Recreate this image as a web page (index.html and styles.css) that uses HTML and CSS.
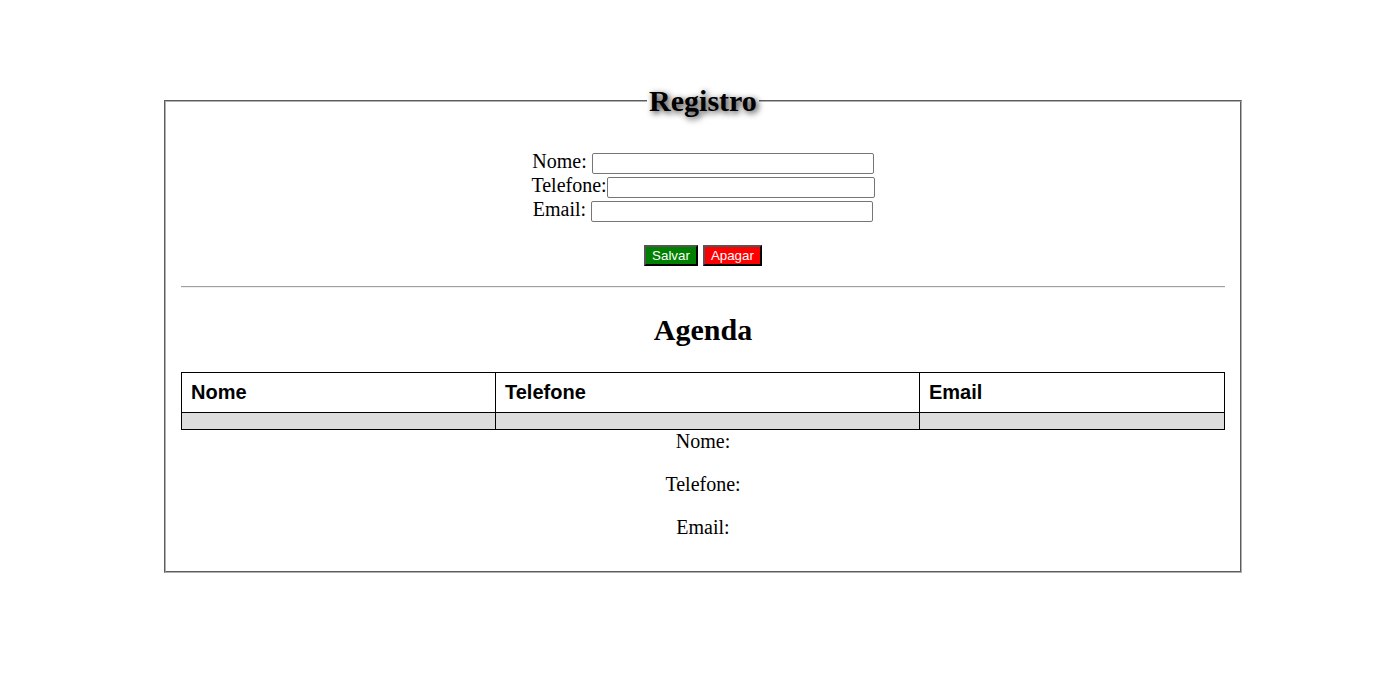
FILE: index.html
```html
<!DOCTYPE html>
<html lang="pt">
<head>
<meta charset="utf-8">
<title>Agenda</title>
<link rel="stylesheet" href="styles.css">
</head>
<body>
<fieldset class="registro">
  <legend class="registro-title">Registro</legend>
  <form class="form">
    <div class="fields">
      <div class="field-line">Nome: <input type="text" class="inp"></div>
      <div class="field-line">Telefone:<input type="text" class="inp inp-tel"></div>
      <div class="field-line">Email: <input type="text" class="inp"></div>
    </div>
    <div class="actions">
      <button type="button" class="btn btn-save">Salvar</button>
      <button type="button" class="btn btn-del">Apagar</button>
    </div>
  </form>
  <hr class="divider">
  <h2 class="agenda-title">Agenda</h2>
  <table class="agenda">
    <thead>
      <tr><th class="col-nome">Nome</th><th class="col-tel">Telefone</th><th class="col-email">Email</th></tr>
    </thead>
    <tbody>
      <tr class="empty-row"><td></td><td></td><td></td></tr>
    </tbody>
  </table>
  <div class="details">
    <p>Nome:</p>
    <p>Telefone:</p>
    <p>Email:</p>
  </div>
</fieldset>
</body>
</html>
```

FILE: styles.css
```css
html {
  background: #fff;
}
body {
  margin: 8px;
  font-family: "Liberation Serif", "Times New Roman", serif;
  font-size: 20px;
  color: #000;
}
.registro {
  width: 1044px;
  margin: 76px 0 0 156px;
  padding: 7px 15px 12px;
  border: 2px groove #b0b0b0;
  text-align: center;
}
.registro-title {
  padding: 0 2px;
  margin: 0 auto;
  font-size: 30px;
  font-weight: bold;
  text-shadow: 2px 2px 6px #222;
}
.form {
  margin: 24px 0 0;
}
.field-line {
  line-height: 24px;
  height: 24px;
}
.inp {
  font-family: "Liberation Sans", Arial, sans-serif;
  font-size: 13.33px;
  width: 276px;
  height: 17px;
  padding: 1px 2px;
  border: 1px solid #767676;
  border-radius: 2px;
  box-sizing: content-box;
  vertical-align: baseline;
}
.inp-tel {
  width: 262px;
}
.actions {
  margin-top: 24px;
  line-height: 21px;
}
.btn {
  font-family: "Liberation Sans", Arial, sans-serif;
  font-size: 13.33px;
  color: #fff;
  height: 21px;
  padding: 0 6px;
  border: 2px outset #555;
  vertical-align: top;
}
.btn-save {
  background: #008000;
}
.btn-del {
  background: #ff0000;
}
.divider {
  margin: 20px 0 0;
  border: 0;
  border-top: 1px solid #a0a0a0;
  border-bottom: 1px solid #eee;
}
.agenda-title {
  font-size: 30px;
  margin: 25px 0 25px;
}
.agenda {
  width: 100%;
  border-collapse: collapse;
  font-family: "Liberation Sans", Arial, sans-serif;
}
.agenda th {
  border: 1px solid #000;
  text-align: left;
  font-size: 20px;
  height: 39px;
  padding: 0 9px;
}
.agenda td {
  border: 1px solid #000;
  background: #ddd;
  height: 16px;
  padding: 0;
}
.col-nome { width: 295px; }
.col-tel { width: 405px; }
.details p {
  margin: 20px 0;
}
.details p:first-child {
  margin-top: 0;
}
```
